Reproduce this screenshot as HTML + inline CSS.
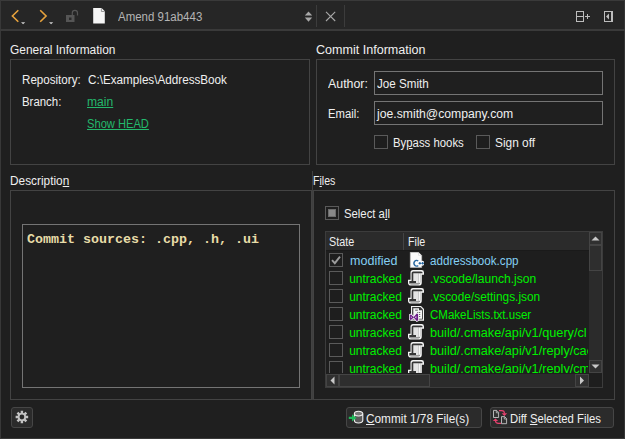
<!DOCTYPE html>
<html>
<head>
<meta charset="utf-8">
<style>
*{box-sizing:border-box;margin:0;padding:0}
html,body{width:625px;height:439px;overflow:hidden;background:#1f1f1f}
body{position:relative;font-family:"Liberation Sans",sans-serif;font-size:12px;color:#efefef;line-height:14px}
.abs{position:absolute}
.t{position:absolute;white-space:nowrap;height:14px;line-height:14px;transform-origin:0 0}
.gb{position:absolute;border:1px solid #434343}
.inp{position:absolute;border:1px solid #747474;background:#1f1f1f}
.cb{position:absolute;width:14px;height:14px;border:1px solid #5a5a5a;background:#1e1e1e}
.btn{position:absolute;border:1px solid #464646;background:#2b2b2b;border-radius:3px}
.lnk{color:#23b86c;text-decoration:underline}
.grn{color:#00f000}
.blu{color:#84d0f4}
u{text-decoration:underline;text-decoration-thickness:1px;text-underline-offset:1px}
</style>
</head>
<body>

<!-- window frame -->
<div class="abs" style="left:0;top:0;width:625px;height:1px;background:#3a3a3a"></div>
<div class="abs" style="left:0;top:0;width:1px;height:439px;background:#383838"></div>
<div class="abs" style="left:624px;top:0;width:1px;height:439px;background:#353535"></div>
<div class="abs" style="left:0;top:438px;width:625px;height:1px;background:#383838"></div>

<!-- toolbar -->
<div class="abs" style="left:1px;top:1px;width:623px;height:28px;background:#262626"></div>
<div class="abs" style="left:0;top:29px;width:625px;height:2px;background:#3a3a3a"></div>
<svg class="abs" style="left:0;top:0" width="625" height="31" viewBox="0 0 625 31">
  <!-- back / forward -->
  <polyline points="18.3,10.2 12.4,16 18.3,21.8" fill="none" stroke="#e8a33d" stroke-width="1.6"/>
  <polygon points="21,22.3 25.2,22.3 23.1,24.3" fill="#cfcfcf"/>
  <polyline points="40.2,10.2 46.1,16 40.2,21.8" fill="none" stroke="#e8a33d" stroke-width="1.6"/>
  <polygon points="49,22.3 53.2,22.3 51.1,24.3" fill="#cfcfcf"/>
  <!-- lock -->
  <rect x="66" y="15" width="8.5" height="7" fill="#555"/>
  <rect x="69" y="17.5" width="2.5" height="2.5" fill="#2a2a2a"/>
  <path d="M72.3 15 V13 a2.6 2.6 0 0 1 5.2 0 V15.5" fill="none" stroke="#555" stroke-width="1.2"/>
  <!-- file icon -->
  <path d="M93.2 8 H101.6 L104.8 11.2 V23.6 H93.2 Z" fill="#f6f6f6"/>
  <path d="M101.4 8.2 V11.5 H104.7" fill="none" stroke="#8c8c8c" stroke-width="0.9"/>
  <!-- combobox arrows -->
  <polygon points="304.8,15.6 312.2,15.6 308.5,11.4" fill="#a8a8a8"/>
  <polygon points="304.8,17.6 312.2,17.6 308.5,21.8" fill="#a8a8a8"/>
  <!-- separators -->
  <rect x="316" y="5" width="1" height="22" fill="#3c3c3c"/>
  <rect x="344" y="5" width="1" height="22" fill="#3c3c3c"/>
  <!-- close X -->
  <path d="M326 11.8 L335.2 21 M335.2 11.8 L326 21" stroke="#a8a8a8" stroke-width="1.1" fill="none"/>
  <!-- split icon -->
  <rect x="576.5" y="11.5" width="7" height="10" fill="none" stroke="#bdbdbd" stroke-width="1"/>
  <rect x="576" y="16" width="8" height="1" fill="#bdbdbd"/>
  <rect x="585" y="16" width="5" height="1" fill="#bdbdbd"/>
  <rect x="587" y="14" width="1" height="5" fill="#bdbdbd"/>
  <!-- hide sidebar icon -->
  <rect x="604.5" y="11.5" width="8" height="10" fill="none" stroke="#bdbdbd" stroke-width="1"/>
  <rect x="611" y="11" width="2" height="11" fill="#bdbdbd"/>
  <polygon points="609,13.5 609,19.5 606,16.5" fill="#bdbdbd"/>
</svg>
<div class="t" id="amend" style="left:118.00px;top:10px;color:#b4b4b4;transform:scaleX(0.9569)">Amend 91ab443</div>

<!-- General Information -->
<div class="t" id="gi" style="left:10.30px;top:43px;transform:scaleX(0.9944)">General Information</div>
<div class="gb" style="left:10px;top:59px;width:300px;height:106px"></div>
<div class="t" id="repo" style="left:22.00px;top:73px;transform:scaleX(0.9667)">Repository:</div>
<div class="t" id="repov" style="left:87.50px;top:73px;transform:scaleX(0.9734)">C:\Examples\AddressBook</div>
<div class="t" id="branch" style="left:22.00px;top:95px;transform:scaleX(0.9512)">Branch:</div>
<div class="t lnk" id="main" style="left:87.00px;top:95px;transform:scaleX(1.0079)">main</div>
<div class="t lnk" id="showhead" style="left:87.00px;top:117px;transform:scaleX(0.9284)">Show HEAD</div>

<!-- Commit Information -->
<div class="t" id="ci" style="left:316.10px;top:43px;transform:scaleX(1.0457)">Commit Information</div>
<div class="gb" style="left:316px;top:59px;width:299px;height:106px"></div>
<div class="t" id="author" style="left:327.60px;top:77px;transform:scaleX(1.0316)">Author:</div>
<div class="inp" style="left:374px;top:71px;width:229px;height:24px"></div>
<div class="t" id="joe" style="left:376.60px;top:77px;transform:scaleX(0.9698)">Joe Smith</div>
<div class="t" id="email" style="left:328.20px;top:107px;transform:scaleX(0.9396)">Email:</div>
<div class="inp" style="left:374px;top:101px;width:229px;height:24px"></div>
<div class="t" id="emailv" style="left:377.00px;top:107px;transform:scaleX(1.0163)">joe.smith@company.com</div>
<div class="cb" style="left:374px;top:135px"></div>
<div class="t" id="bypass" style="left:393.00px;top:136px;transform:scaleX(0.9467)">By<u>p</u>ass hooks</div>
<div class="cb" style="left:476px;top:135px"></div>
<div class="t" id="signoff" style="left:494.80px;top:136px;transform:scaleX(0.9902)">Sign off</div>

<!-- Description -->
<div class="t" id="desc" style="left:10.00px;top:174px;transform:scaleX(0.9867)">Descriptio<u>n</u></div>
<div class="gb" style="left:10px;top:190px;width:302px;height:210px"></div>
<div class="inp" style="left:22px;top:224px;width:278px;height:164px;background:#1f1f1f"></div>
<div class="t" id="msg" style="left:27px;top:232.5px;font-family:'Liberation Mono',monospace;font-weight:bold;font-size:13.33px;color:#e8dca8">Commit sources: .cpp, .h, .ui</div>

<!-- splitter -->
<div class="abs" style="left:312px;top:171px;width:1px;height:229px;background:#3f3f3f"></div>

<!-- Files -->
<div class="t" id="files" style="left:313.20px;top:174px;transform:scaleX(0.8804)">F<u>i</u>les</div>
<div class="gb" style="left:313px;top:190px;width:302px;height:210px"></div>
<div class="cb" style="left:325px;top:206px"></div>
<div class="abs" style="left:328px;top:209px;width:8px;height:8px;background:#888;border:1px solid #6c6c6c"></div>
<div class="t" id="selall" style="left:344.00px;top:207px;transform:scaleX(0.9430)">Select a<u>l</u>l</div>

<!-- table -->
<div class="abs" id="tbl" style="left:325px;top:231px;width:278px;height:157px;border:1px solid #3c3c3c;background:#1e1e1e;overflow:hidden">
  <div class="abs" style="left:0;top:0;width:263px;height:19px;background:#2b2b2b;border-bottom:1px solid #1a1a1a"></div>
  <div class="abs" style="left:77px;top:1px;width:1px;height:17px;background:#444"></div>
  <div class="t" id="hstate" style="left:2.50px;top:3px;transform:scaleX(0.9002)">State</div>
  <div class="t" id="hfile" style="left:82.00px;top:3px;transform:scaleX(0.8905)">File</div>
</div>

<!-- rows (absolute to page) -->
<div class="abs" id="rows" style="left:326px;top:251px;width:262px;height:122px;overflow:hidden">
<div class="cb" style="left:3px;top:2px"></div>
<svg class="abs" style="left:3px;top:2px" width="14" height="14" viewBox="0 0 14 14"><path d="M3 7.2 L5.8 10.2 L11 3.6" fill="none" stroke="#9c9c9c" stroke-width="1.9"/></svg>
<div id="st0" class="t blu st" style="left:23.80px;top:3px;transform:scaleX(1.0444)">modified</div>
<svg class="abs" style="left:82px;top:1px" width="16" height="16" viewBox="0 0 16 16"><path d="M2.3 0.2 H10.4 L13.7 3.5 V15.4 H2.3 Z" fill="#fbfbfb" stroke="#c4c4c4" stroke-width="0.6"/>
  <path d="M10.3 0.2 V3.6 H13.7 Z" fill="#cfcfcf"/>
  <path d="M10.9 1.3 V3.1 H12.7 Z" fill="#fff"/>
  <rect x="10" y="8.8" width="6.3" height="5" rx="2.3" fill="#fbfbfb"/>
  <path d="M10.2 9.1 A2.5 2.9 0 1 0 10.2 13.4" fill="none" stroke="#2a68a0" stroke-width="1.4"/>
  <path d="M10.6 11.3 H13.1 M11.85 10 V12.6 M13.4 11.3 H15.9 M14.65 10 V12.6" stroke="#2a68a0" stroke-width="1.2" fill="none"/></svg>
<div id="fn0" class="t blu fn" style="left:104.00px;top:3px;transform:scaleX(0.9692)">addressbook.cpp</div>
<div class="cb" style="left:3px;top:20px"></div>
<div id="st1" class="t grn st" style="left:23.20px;top:21px;transform:scaleX(1.0000)">untracked</div>
<svg class="abs" style="left:82px;top:19px" width="16" height="16" viewBox="0 0 16 16"><path d="M5 0 H13.6 Q16 0 16 2.4 V4.8 H13.8 V12.4 Q13.8 15.6 10.6 15.6 H3 Q0 15.6 0 12.8 V9.7 H2.5 V2.5 Q2.5 0 5 0 Z" fill="#f4f4f4"/>
  <path d="M5.2 1.4 H13 Q14.7 1.4 14.7 3.3 H12.2 V12.2 Q12.2 14.3 10.4 14.3 H3.2 Q1.3 14.3 1.3 12.8 V11 H3.6 V3 Q3.6 1.4 5.2 1.4 Z" fill="#363636"/>
  <path d="M5.3 3.3 H10.8 V12.9 H8 V11 H5.3 Z" fill="#e4e4e4"/>
  <rect x="10.8" y="3.3" width="1.4" height="9.6" fill="#f6f6f6"/>
  <path d="M1.4 12.9 H8 V13 H12.1 Q11.8 14.3 10.4 14.3 H3.2 Q1.4 14.3 1.4 12.9 Z" fill="#9a9a9a"/></svg>
<div id="fn1" class="t grn fn" style="left:104.00px;top:21px;transform:scaleX(1.0077)">.vscode/launch.json</div>
<div class="cb" style="left:3px;top:38px"></div>
<div id="st2" class="t grn st" style="left:23.20px;top:39px;transform:scaleX(1.0000)">untracked</div>
<svg class="abs" style="left:82px;top:37px" width="16" height="16" viewBox="0 0 16 16"><path d="M5 0 H13.6 Q16 0 16 2.4 V4.8 H13.8 V12.4 Q13.8 15.6 10.6 15.6 H3 Q0 15.6 0 12.8 V9.7 H2.5 V2.5 Q2.5 0 5 0 Z" fill="#f4f4f4"/>
  <path d="M5.2 1.4 H13 Q14.7 1.4 14.7 3.3 H12.2 V12.2 Q12.2 14.3 10.4 14.3 H3.2 Q1.3 14.3 1.3 12.8 V11 H3.6 V3 Q3.6 1.4 5.2 1.4 Z" fill="#363636"/>
  <path d="M5.3 3.3 H10.8 V12.9 H8 V11 H5.3 Z" fill="#e4e4e4"/>
  <rect x="10.8" y="3.3" width="1.4" height="9.6" fill="#f6f6f6"/>
  <path d="M1.4 12.9 H8 V13 H12.1 Q11.8 14.3 10.4 14.3 H3.2 Q1.4 14.3 1.4 12.9 Z" fill="#9a9a9a"/></svg>
<div id="fn2" class="t grn fn" style="left:104.00px;top:39px;transform:scaleX(0.9891)">.vscode/settings.json</div>
<div class="cb" style="left:3px;top:56px"></div>
<div id="st3" class="t grn st" style="left:23.20px;top:57px;transform:scaleX(1.0000)">untracked</div>
<svg class="abs" style="left:82px;top:55px" width="16" height="16" viewBox="0 0 16 16"><path d="M3 0 H13 L16 3 V14.7 H3 Z" fill="#f2f2f2"/>
  <path d="M4.1 1.1 H12.4 L14.9 3.6 V13.6 H4.1 Z" fill="#383838"/>
  <path d="M5.3 2.2 H11 V4.2 H14 V12.8 H5.3 Z" fill="#f4f4f4"/>
  <rect x="7.2" y="3.7" width="2.6" height="0.9" fill="#444"/>
  <rect x="9.2" y="6" width="1" height="1" fill="#444"/>
  <rect x="11.2" y="6" width="1" height="1" fill="#444"/>
  <rect x="11.2" y="8" width="1" height="1" fill="#444"/>
  <rect x="11.2" y="10" width="1" height="1" fill="#444"/>
  <path d="M1 8.4 L3 7.6 L5.6 9.8 L8.6 6.4 L10.8 7.3 V15.1 L8.6 16 L5.6 12.6 L3 14.8 L1 14 Z" fill="#f4f4f4"/>
  <path d="M1.7 8.9 L2.9 8.4 L5.7 10.9 L8.7 7.4 L10.1 8 V14.4 L8.7 15 L5.7 11.5 L2.9 14 L1.7 13.5 Z M2.9 10.3 V12.1 L4 11.2 Z M8.3 10 L7 11.2 L8.3 12.4 Z" fill="#6b1d88" fill-rule="evenodd"/></svg>
<div id="fn3" class="t grn fn" style="left:104.40px;top:57px;transform:scaleX(0.9600)">CMakeLists.txt.user</div>
<div class="cb" style="left:3px;top:74px"></div>
<div id="st4" class="t grn st" style="left:23.20px;top:75px;transform:scaleX(1.0000)">untracked</div>
<svg class="abs" style="left:82px;top:73px" width="16" height="16" viewBox="0 0 16 16"><path d="M5 0 H13.6 Q16 0 16 2.4 V4.8 H13.8 V12.4 Q13.8 15.6 10.6 15.6 H3 Q0 15.6 0 12.8 V9.7 H2.5 V2.5 Q2.5 0 5 0 Z" fill="#f4f4f4"/>
  <path d="M5.2 1.4 H13 Q14.7 1.4 14.7 3.3 H12.2 V12.2 Q12.2 14.3 10.4 14.3 H3.2 Q1.3 14.3 1.3 12.8 V11 H3.6 V3 Q3.6 1.4 5.2 1.4 Z" fill="#363636"/>
  <path d="M5.3 3.3 H10.8 V12.9 H8 V11 H5.3 Z" fill="#e4e4e4"/>
  <rect x="10.8" y="3.3" width="1.4" height="9.6" fill="#f6f6f6"/>
  <path d="M1.4 12.9 H8 V13 H12.1 Q11.8 14.3 10.4 14.3 H3.2 Q1.4 14.3 1.4 12.9 Z" fill="#9a9a9a"/></svg>
<div id="fn4" class="t grn fn" style="left:103.9px;top:75px;transform:scaleX(1.058)">build/.cmake/api/v1/query/cl</div>
<div class="cb" style="left:3px;top:92px"></div>
<div id="st5" class="t grn st" style="left:23.20px;top:93px;transform:scaleX(1.0000)">untracked</div>
<svg class="abs" style="left:82px;top:91px" width="16" height="16" viewBox="0 0 16 16"><path d="M5 0 H13.6 Q16 0 16 2.4 V4.8 H13.8 V12.4 Q13.8 15.6 10.6 15.6 H3 Q0 15.6 0 12.8 V9.7 H2.5 V2.5 Q2.5 0 5 0 Z" fill="#f4f4f4"/>
  <path d="M5.2 1.4 H13 Q14.7 1.4 14.7 3.3 H12.2 V12.2 Q12.2 14.3 10.4 14.3 H3.2 Q1.3 14.3 1.3 12.8 V11 H3.6 V3 Q3.6 1.4 5.2 1.4 Z" fill="#363636"/>
  <path d="M5.3 3.3 H10.8 V12.9 H8 V11 H5.3 Z" fill="#e4e4e4"/>
  <rect x="10.8" y="3.3" width="1.4" height="9.6" fill="#f6f6f6"/>
  <path d="M1.4 12.9 H8 V13 H12.1 Q11.8 14.3 10.4 14.3 H3.2 Q1.4 14.3 1.4 12.9 Z" fill="#9a9a9a"/></svg>
<div id="fn5" class="t grn fn" style="left:103.9px;top:93px;transform:scaleX(1.058)">build/.cmake/api/v1/reply/cache-v2-0f3a.json</div>
<div class="cb" style="left:3px;top:110px"></div>
<div id="st6" class="t grn st" style="left:23.20px;top:111px;transform:scaleX(1.0000)">untracked</div>
<svg class="abs" style="left:82px;top:109px" width="16" height="16" viewBox="0 0 16 16"><path d="M5 0 H13.6 Q16 0 16 2.4 V4.8 H13.8 V12.4 Q13.8 15.6 10.6 15.6 H3 Q0 15.6 0 12.8 V9.7 H2.5 V2.5 Q2.5 0 5 0 Z" fill="#f4f4f4"/>
  <path d="M5.2 1.4 H13 Q14.7 1.4 14.7 3.3 H12.2 V12.2 Q12.2 14.3 10.4 14.3 H3.2 Q1.3 14.3 1.3 12.8 V11 H3.6 V3 Q3.6 1.4 5.2 1.4 Z" fill="#363636"/>
  <path d="M5.3 3.3 H10.8 V12.9 H8 V11 H5.3 Z" fill="#e4e4e4"/>
  <rect x="10.8" y="3.3" width="1.4" height="9.6" fill="#f6f6f6"/>
  <path d="M1.4 12.9 H8 V13 H12.1 Q11.8 14.3 10.4 14.3 H3.2 Q1.4 14.3 1.4 12.9 Z" fill="#9a9a9a"/></svg>
<div id="fn6" class="t grn fn" style="left:103.9px;top:111px;transform:scaleX(1.058)">build/.cmake/api/v1/reply/cmakeFiles-v1.json</div>
</div>

<!-- scrollbars -->
<div class="abs" style="left:589px;top:232px;width:13px;height:141px;background:#2b2b2b"></div>
<div class="abs" style="left:589px;top:232px;width:13px;height:13px;background:#303030;border:1px solid #444"></div>
<div class="abs" style="left:589px;top:245px;width:13px;height:26px;background:#2e2e2e;border:1px solid #444"></div>
<div class="abs" style="left:589px;top:360px;width:13px;height:13px;background:#303030;border:1px solid #444"></div>
<div class="abs" style="left:326px;top:374px;width:263px;height:13px;background:#2b2b2b"></div>
<div class="abs" style="left:326px;top:374px;width:13px;height:13px;background:#303030;border:1px solid #444"></div>
<div class="abs" style="left:339px;top:374px;width:91px;height:13px;background:#2e2e2e;border:1px solid #444"></div>
<div class="abs" style="left:575px;top:374px;width:14px;height:13px;background:#303030;border:1px solid #444"></div>
<svg class="abs" style="left:0;top:0" width="625" height="439" viewBox="0 0 625 439">
  <polygon points="591.5,240.5 599.5,240.5 595.5,236.5" fill="#c8c8c8"/>
  <polygon points="591.5,364.5 599.5,364.5 595.5,368.5" fill="#c8c8c8"/>
  <polygon points="334.5,376.5 334.5,384.5 330.5,380.5" fill="#c8c8c8"/>
  <polygon points="580,376.5 580,384.5 584,380.5" fill="#c8c8c8"/>
</svg>

<!-- bottom buttons -->
<div class="btn" style="left:11px;top:407px;width:22px;height:21px"></div>
<div class="btn" style="left:346px;top:407px;width:136px;height:21px"></div>
<div class="t" id="commitbtn" style="left:366.40px;top:412px;transform:scaleX(0.9848)"><u>C</u>ommit 1/78 File(s)</div>
<div class="btn" style="left:490px;top:407px;width:124px;height:21px"></div>
<div class="t" id="diffbtn" style="left:510.30px;top:412px;transform:scaleX(0.942)">Diff <u>S</u>elected Files</div>

<svg class="abs" style="left:0;top:400px" width="625" height="39" viewBox="0 400 625 39">
  <!-- gear -->
  <path d="M20.75 412.86 L20.63 410.73 L23.17 410.73 L23.05 412.86 L24.02 413.26 L25.44 411.67 L27.23 413.46 L25.64 414.88 L26.04 415.85 L28.17 415.73 L28.17 418.27 L26.04 418.15 L25.64 419.12 L27.23 420.54 L25.44 422.33 L24.02 420.74 L23.05 421.14 L23.17 423.27 L20.63 423.27 L20.75 421.14 L19.78 420.74 L18.36 422.33 L16.57 420.54 L18.16 419.12 L17.76 418.15 L15.63 418.27 L15.63 415.73 L17.76 415.85 L18.16 414.88 L16.57 413.46 L18.36 411.67 L19.78 413.26 Z M24.30 417.00 A2.4 2.4 0 1 0 19.50 417.00 A2.4 2.4 0 1 0 24.30 417.00 Z" fill="#c4c4c4" fill-rule="evenodd"/>
  <!-- commit icon -->
  <path d="M354.4 413.6 V420.6 A4.2 2.4 0 0 0 362.8 420.6 V413.6 Z" fill="#5a5a5a"/>
  <ellipse cx="358.6" cy="413.6" rx="4.2" ry="2.4" fill="#767676"/>
  <path d="M354.4 413.6 V420.6 A4.2 2.4 0 0 0 362.8 420.6 V413.6 A4.2 2.4 0 0 0 354.4 413.6 A4.2 2.4 0 0 0 362.8 413.6" fill="none" stroke="#f0f0f0" stroke-width="1.1"/>
  <path d="M348.8 416.7 H352 V414.3 L356.5 417.9 L352 421.5 V419.1 H348.8 Z" fill="#20b859"/>
  <!-- diff icon -->
  <path d="M493.5 410.4 H496.6 L498.6 412.4 V417.5 H493.5 Z" fill="#333" stroke="#c4c4c4" stroke-width="0.9"/>
  <path d="M496.3 410.4 V412.8 H498.6" fill="none" stroke="#c4c4c4" stroke-width="0.8"/>
  <path d="M501.5 416.6 H504.6 L506.6 418.6 V423.7 H501.5 Z" fill="#333" stroke="#c4c4c4" stroke-width="0.9"/>
  <path d="M504.3 416.6 V419 H506.6" fill="none" stroke="#c4c4c4" stroke-width="0.8"/>
  <path d="M499 410.6 H501.6 Q504.5 410.6 504.5 413.4" fill="none" stroke="#e8416f" stroke-width="1.1"/>
  <path d="M501.7 413.3 H507.2 L504.45 415.9 Z" fill="#e8416f"/>
  <path d="M501 423.4 H498.4 Q495.5 423.4 495.5 420.8" fill="none" stroke="#e8416f" stroke-width="1.1"/>
  <path d="M492.8 421.1 H498.2 L495.5 418.4 Z" fill="#e8416f"/>
</svg>
</body>
</html>
